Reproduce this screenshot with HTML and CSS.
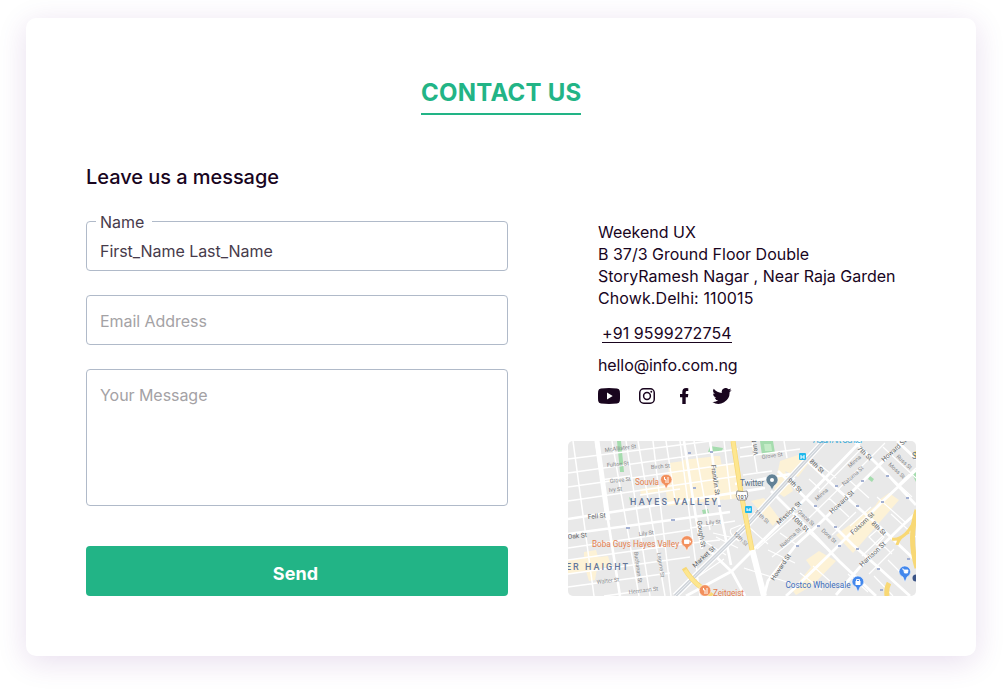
FILE: index.html
```html
<!DOCTYPE html>
<html lang="en">
<head>
<meta charset="utf-8">
<title>Contact us</title>
<link rel="stylesheet" href="styles.css">
</head>
<body>
<main class="card">
  <h1 class="title">CONTACT US</h1>
  <div class="columns">
    <form class="form">
      <h2 class="subtitle">Leave us a message</h2>
      <fieldset class="field named"><legend>Name</legend><span>First_Name Last_Name</span></fieldset>
      <div class="field email">Email Address</div>
      <div class="field message">Your Message</div>
      <button class="send" type="button">Send</button>
    </form>
    <section class="info">
      <address class="details">
        <p class="address">Weekend UX<br>B 37/3 Ground Floor Double<br>StoryRamesh Nagar , Near Raja Garden<br><span class="city">Chowk.Delhi: 110015</span></p>
        <p><a class="phone">+91 9599272754</a></p>
        <p class="mail">hello@info.com.ng</p>
        <div class="social">
          <svg width="22" height="16" viewBox="0 0 22 16"><path fill="#19051e" fill-rule="evenodd" d="M3 .4Q11-.4 19 .4Q21.500 .6 21.800 3Q22.300 8 21.800 13Q21.500 15.400 19 15.600Q11 16.400 3 15.600Q.5 15.400 .2 13Q-.3 8 .2 3Q.5 .6 3 .4ZM9 4.600V11.400L14.700 8Z"/></svg>
          <svg width="16" height="16" viewBox="0 0 16 16" fill="none" stroke="#19051e" stroke-width="1.500"><rect x=".75" y=".75" width="14.500" height="14.500" rx="4"/><circle cx="8" cy="8" r="3.400"/><circle cx="12.300" cy="3.700" r=".95" fill="#19051e" stroke="none"/></svg>
          <svg width="9" height="16" viewBox="0 0 9 16"><path fill="#19051e" d="M2.300 16V9.200H0V6H2.300V4Q2.300 0 6.200 0Q7.500 0 8.300 .2V3H6.900Q5.700 3 5.700 4.200V6H8.300L7.900 9.200H5.700V16Z"/></svg>
          <svg width="20" height="16" viewBox="0 0 24 20"><path fill="#19051e" d="M24 2.400a10 10 0 0 1-2.800.8A5 5 0 0 0 23.300.5a10 10 0 0 1-3.100 1.200A4.900 4.900 0 0 0 11.800 6.200 14 14 0 0 1 1.700 1a4.900 4.900 0 0 0 1.500 6.600A5 5 0 0 1 1 7v.1A4.900 4.900 0 0 0 4.900 11.900a5 5 0 0 1-2.200.1 4.900 4.900 0 0 0 4.600 3.400A10 10 0 0 1 0 17.500 14 14 0 0 0 21.500 5Q23 4 24 2.400Z"/></svg>
        </div>
      </address>
      <svg class="map" viewBox="568 441 348 155" role="img" aria-label="Map">
        <rect x="568" y="441" width="348" height="155" fill="#e9e9e9"/>
        <!-- commercial blocks -->
        <g fill="#fdf2d6">
          <path d="M669 463L720 456 728 499 668 506 666 492 641 496 640 489 668 484ZM717 465L734 463 740 498 724 500ZM682 460L718 456 723 490 688 495ZM584 552L596 550 598 557 608 556 611 566 597 569 595 580 589 581 586 571 568 574V560L584 558ZM780 461L804 453 808 464 798 477 785 471 793 491 784 497 774 490ZM751 501L764 498 779 518 773 526ZM836 535L875 506 879 500 889 493 899 500 853 553ZM806 560L819 551 836 561 813 585 796 595 792 590 811 567Z"/>
        </g>
        <g fill="#a5dcae"><path d="M617 441H621L624 472H620ZM760 441H773L775 453 762 455ZM710 446L723 448 722 451 708 452ZM702 510L708 509 709 513 703 514ZM870 476L874 479 872 482 868 479ZM912 474L916 471V482ZM629 497L632 499 630 501Z"/></g>
        <path d="M764 444H771L772 451H765Z" fill="#c4ebc7"/>
        <!-- western street grid -->
        <g fill="none" stroke="#fff" stroke-width="1.500">
          <path d="M573 441L594 596M612 441L639 596M626 441L650 596M638 441L665 596M653 441L671 596M666 441L675 500M680 441L700 596M694 441L710 530M724 441L731 499M568 459L735 438M568 473L738 449M568 487L738 463M568 501L738 476M568 548L690 530M568 560L690 543M568 574L690 557M568 587L670 573M604 596L655 589M690 528L735 521M692 543L720 540M740 457L800 449M743 475L772 471M752 441L757 472M784 441L787 458M740 448L753 446M600 480L630 476M640 495L680 489"/>
        </g>
        <g fill="none" stroke="#fff" stroke-width="2.600">
          <path d="M568 519L765 488M568 534L730 512M735 484L790 474M596 441L608 520 620 596M684 441L696 518 702 549M710 441L720 510 731 565"/>
        </g>
        <path d="M597 441L608 520" stroke="#fff" stroke-width="5"/>
        <!-- south-eastern street grid -->
        <g fill="none" stroke="#fff" stroke-width="2.800">
          <path d="M686 596L732 571 753 550 803 501 861 441M732 572L709 550M732 572L745 596M764 596L768 581 796 545 818 525 863 481 904 441M798 585L829 555 883 501 916 470M786 596L798 585M836 595L859 568 903 525 916 513M804 458L836 488 879 526 916 561M854 441L889 476 916 505M778 471L816 508 853 545 879 568 910 596M771 491L806 526 839 561 876 596M897 441L916 459"/>
        </g>
        <path d="M752 549L764 596" stroke="#fff" stroke-width="6"/>
        <g fill="none" stroke="#fff" stroke-width="1.200">
          <path d="M819 492L862 448M809 518L862 466 885 443M829 498L849 517M849 480L869 498M870 458L912 497M883 447L916 478M877 497L905 522M780 533L797 545M768 550L795 563M750 528L768 544M742 541L730 537 713 533M738 548L716 537M726 555L704 541M744 568L790 583M699 576L724 559M757 549L802 509M772 557L806 530M800 573L822 590M813 566L832 583M826 548L804 528M862 556L886 533M848 574L868 592M869 574L894 549M888 560L905 577M891 514L916 537M820 465L836 478M809 479L820 489M764 504L795 478M879 464L889 455M899 484L916 468M832 535L856 512M850 526L871 507M874 576L893 596"/>
          <path d="M869 537L877 530 884 537 877 545ZM739 541Q728 534 731 529L741 525M868 556Q883 543 887 549L892 554"/>
        </g>
        <path d="M675 596L748 524 801 466 824 441" fill="none" stroke="#fff" stroke-width="6"/>
        <path d="M675 596L748 524 801 466 824 441" fill="none" stroke="#cfd4da" stroke-width="3.500"/>
        <path d="M675 596L748 524 801 466 824 441" fill="none" stroke="#eef0f3" stroke-width="1"/>
        <!-- highways -->
        <g fill="none" stroke="#f8d875" stroke-width="5"><path d="M733 441L741 493 752 550M684 568Q692 581 702 588L712 596M917 510Q908 538 917 568M887 596Q886 588 889 583"/><path stroke-width="3" d="M892 539Q904 541 914 522M897 545Q899 537 909 532M916 451V458"/></g>
        <g fill="none" stroke="#fde68f" stroke-width="3.500"><path d="M733 441L741 493 752 550M685 570Q692 581 702 588"/></g>
        <!-- transit and direction markers -->
        <g fill="#a3b0d2"><path d="M688 452h3v2h-3zM693 487h3v2h-3zM626 527h4v2h-4zM671 519h4v2h-4zM710 451h3v2h-3zM718 505h3v2h-3zM835 485h3v2h-3zM861 480h3v2h-3zM886 475h3v2h-3zM814 505h3v2h-3zM856 505h3v2h-3zM881 501h3v2h-3zM906 497h3v2h-3zM838 545h3v2h-3zM856 548h3v2h-3zM877 568h3v2h-3zM834 526h3v2h-3zM817 525h3v2h-3zM880 589h3v2h-3zM907 558h3v2h-3zM796 545h3v2h-3z"/></g>
        <g fill="#20b8ec"><rect x="799" y="453" width="7" height="7" rx="1"/><rect x="745" y="506" width="7" height="7" rx="1"/></g>
        <g fill="none" stroke="#fff"><path d="M801 455V459M804 455V459M801 457H804M747 508V511M750 508V511M747 510H750"/></g>
        <path d="M737 491Q742 492 747 491 749 496 746 500H738Q735 496 737 491Z" fill="#fff" stroke="#777" stroke-width=".8"/>
        <text x="737.500" y="498.600" class="shield">101</text>
        <!-- street names -->
        <g class="street">
          <text transform="translate(605 452) rotate(-7)">McAllister St</text>
          <text transform="translate(607 467) rotate(-5)">Fulton St</text>
          <text transform="translate(651 469) rotate(-4)">Birch St</text>
          <text transform="translate(610 483) rotate(-6)">Grove St</text>
          <text transform="translate(609 492) rotate(-6)">Ivy St</text>
          <text transform="translate(762 459) rotate(-8)">Grove St</text>
          <text transform="translate(639 536) rotate(-7)">Lily St</text>
          <text transform="translate(706 525) rotate(-6)">Lily St</text>
          <text transform="translate(597 584) rotate(-7)">Walter St</text>
          <text transform="translate(629 594) rotate(-7)">Hermann St</text>
          <text transform="translate(634 552) rotate(82)">Buchanan St</text>
          <text transform="translate(657 553) rotate(81)">Laguna St</text>
          <text transform="translate(733 534) rotate(44)">12th St</text>
          <text transform="translate(754 512) rotate(43)">11th St</text>
          <text transform="translate(850 468) rotate(-42)">Minna</text>
          <text transform="translate(817 501) rotate(-42)">Minna</text>
          <text transform="translate(844 486) rotate(-41)">Natoma St</text>
          <text transform="translate(782 548) rotate(-43)">Natoma St</text>
          <text transform="translate(888 465) rotate(43)">Moss St</text>
          <text transform="translate(896 457) rotate(43)">Russ St</text>
          <text transform="translate(821 531) rotate(43)">Dore St</text>
          <text transform="translate(797 512) rotate(43)">Grace St</text>
        </g>
        <g class="street major">
          <text transform="translate(588 519) rotate(-5)">Fell St</text>
          <text transform="translate(568 539) rotate(-6)">Oak St</text>
          <text transform="translate(711 465) rotate(82)">Franklin St</text>
          <text transform="translate(697 521) rotate(81)">Gough St</text>
          <text transform="translate(758 455) rotate(-98)">Van Ness</text>
          <text transform="translate(695 568) rotate(-43)">Market St</text>
          <text transform="translate(779 525) rotate(-43)">Mission St</text>
          <text transform="translate(787 481) rotate(44)">9th St</text>
          <text transform="translate(791 518) rotate(43)">10th St</text>
          <text transform="translate(809 462) rotate(43)">8th St</text>
          <text transform="translate(857 449) rotate(43)">7th St</text>
          <text transform="translate(871 524) rotate(43)">8th St</text>
          <text transform="translate(884 462) rotate(-42)">Howard St</text>
          <text transform="translate(832 514) rotate(-43)">Howard St</text>
          <text transform="translate(774 581) rotate(-56)">Howard St</text>
          <text transform="translate(853 535) rotate(-43)">Folsom St</text>
          <text transform="translate(862 567) rotate(-43)">Harrison St</text>
        </g>
        <!-- districts and places -->
        <g class="district"><text x="630" y="504.500" textLength="87">HAYES VALLEY</text><text x="566" y="570" textLength="62">ER HAIGHT</text></g>
        <g class="place food"><text x="635" y="484.500" textLength="24">Souvla</text><text x="592" y="547.300" textLength="87">Boba Guys Hayes Valley</text><text x="713" y="595.500" textLength="31">Zeitgeist</text></g>
        <text x="740" y="485.500" textLength="24" class="place tech">Twitter</text>
        <text x="785.500" y="587.500" textLength="65" class="place shop">Costco Wholesale</text>
        <text x="813" y="443" textLength="50" class="place museum">Asian Art Center</text>
        <text x="912" y="459" class="place tech">S</text>
        <!-- pins -->
        <g stroke="#fff" stroke-width=".5">
          <path fill="#f2905d" d="M666 489L664.500 485Q660.500 483 660.500 479.500A5.800 5.800 0 0 1 672 479.500Q672 483 668 485ZM687 551L685 547Q681.200 545 681.200 541.500A5.800 5.800 0 0 1 692.800 541.500Q692.800 545 688.500 547Z"/>
          <circle cx="705" cy="590.500" r="5.800" fill="#f2905d"/>
          <path fill="#638296" d="M772 490L770 486Q766 483 766 480A6 6 0 0 1 778 480Q778 483 774 486Z"/>
          <path fill="#4287ec" d="M858 592L856 587Q852 585 852 582A5.900 5.900 0 0 1 863.800 582Q863.800 585 860 587ZM905 582L903 577Q899 575 899 571.800A5.800 5.800 0 0 1 910.600 571.800Q910.600 575 907 577Z"/>
        </g>
        <circle cx="772" cy="480" r="2" fill="#fff"/>
        <path d="M664.500 477V479.500H666V483M668 477V483M703.500 588V590H705V594M707 588V594" fill="none" stroke="#fff" stroke-width="1"/>
        <path d="M684.500 540H689V543.500H684.500ZM689 541H690.500V542.500M902 569H903.500L904.500 573H907.500L908 570H904M856.500 581V579.500H859.500V581" fill="none" stroke="#fff" stroke-width=".9"/>
        <path d="M684.500 540H689V543.500H684.500ZM904 570H908L907.500 573H904.500ZM855.500 581H860.500V585H855.500Z" fill="#fff"/>
        <path d="M916 574.500A3 3 0 0 0 916 581.500Z" fill="#3b5487"/>
      </svg>
    </section>
  </div>
</main>
</body>
</html>
```
FILE: styles.css
```css
* { box-sizing: border-box; }
body {
  margin: 0;
  padding: 18px 30px 38px 26px;
  height: 694px;
  overflow: hidden;
  background: #fff;
  color: #19051e;
  font: 16px/22px Inter, sans-serif;
}
h1, h2, p { margin: 0; }
.card {
  height: 638px;
  padding: 60px;
  border-radius: 10px;
  background: #fff;
  box-shadow: 0 6px 30px rgba(93, 22, 136, .14);
}
.title {
  width: 160px;
  height: 37px;
  margin: 0 auto;
  border-bottom: 2px solid #22b486;
  color: #22b486;
  font-size: 24px;
  font-weight: 700;
  letter-spacing: .25px;
  line-height: 29px;
  white-space: nowrap;
}
.columns {
  display: flex;
  gap: 60px;
  padding-top: 50px;
}
.form {
  display: flex;
  flex-direction: column;
  width: 422px;
}
.subtitle {
  height: 24px;
  margin-bottom: 26px;
  font-size: 20px;
  font-weight: 500;
  letter-spacing: -.05px;
  line-height: 24px;
}
.field {
  margin: 0 0 24px;
  padding: 14px 13px;
  border: 1px solid #b0bac9;
  border-radius: 4px;
  color: #a4a2a5;
  letter-spacing: -.05px;
}
.named {
  height: 58px;
  margin-top: -2px;
  padding: 11px 13px 0 9px;
  color: #473b4b;
}
.named legend {
  height: 16px;
  padding: 0 8px 0 4px;
  line-height: 18px;
}
.named span { padding-left: 4px; }
.email { height: 50px; }
.message { height: 137px; margin-bottom: 40px; }
.send {
  height: 50px;
  padding: 5px 3px 0 0;
  border: 0;
  border-radius: 4px;
  background: #22b486;
  color: #fff;
  font: 700 18px/22px Inter, sans-serif;
  letter-spacing: .1px;
}
.info {
  width: 348px;
  padding-top: 56px;
}
.details {
  height: 220px;
  padding-left: 30px;
  font-style: normal;
}
.address { margin-bottom: 12px; white-space: nowrap; }
.city { letter-spacing: .1px; }
.phone {
  display: block;
  width: 130px;
  height: 22px;
  margin-left: 4px;
  border-bottom: 1px solid #19051e;
  line-height: 24px;
  letter-spacing: .08px;
  white-space: nowrap;
}
.mail { margin: 11px 0; letter-spacing: -.1px; }
.social {
  display: flex;
  align-items: center;
  padding-top: 1px;
}
.social svg:nth-child(2) { margin-left: 19px; }
.social svg:nth-child(3) { margin-left: 25px; }
.social svg:nth-child(4) { margin-left: 23px; }
.map {
  display: block;
  width: 348px;
  height: 155px;
  border-radius: 5px;
}
.street {
  fill: #85878a;
  font: 5.600px Roboto, sans-serif;
}
.major { fill: #5c5f62; font-size: 6.600px; }
.shield { fill: #333; font: 5.500px Roboto, sans-serif; }
.district {
  fill: #64779a;
  font: 500 9px Roboto, sans-serif;
}
.place { font: 8.200px Roboto, sans-serif; }
.food { fill: #e57f50; }
.tech { fill: #587184; }
.shop { fill: #3c6ebd; }
.museum { fill: #35a9d8; }
```
